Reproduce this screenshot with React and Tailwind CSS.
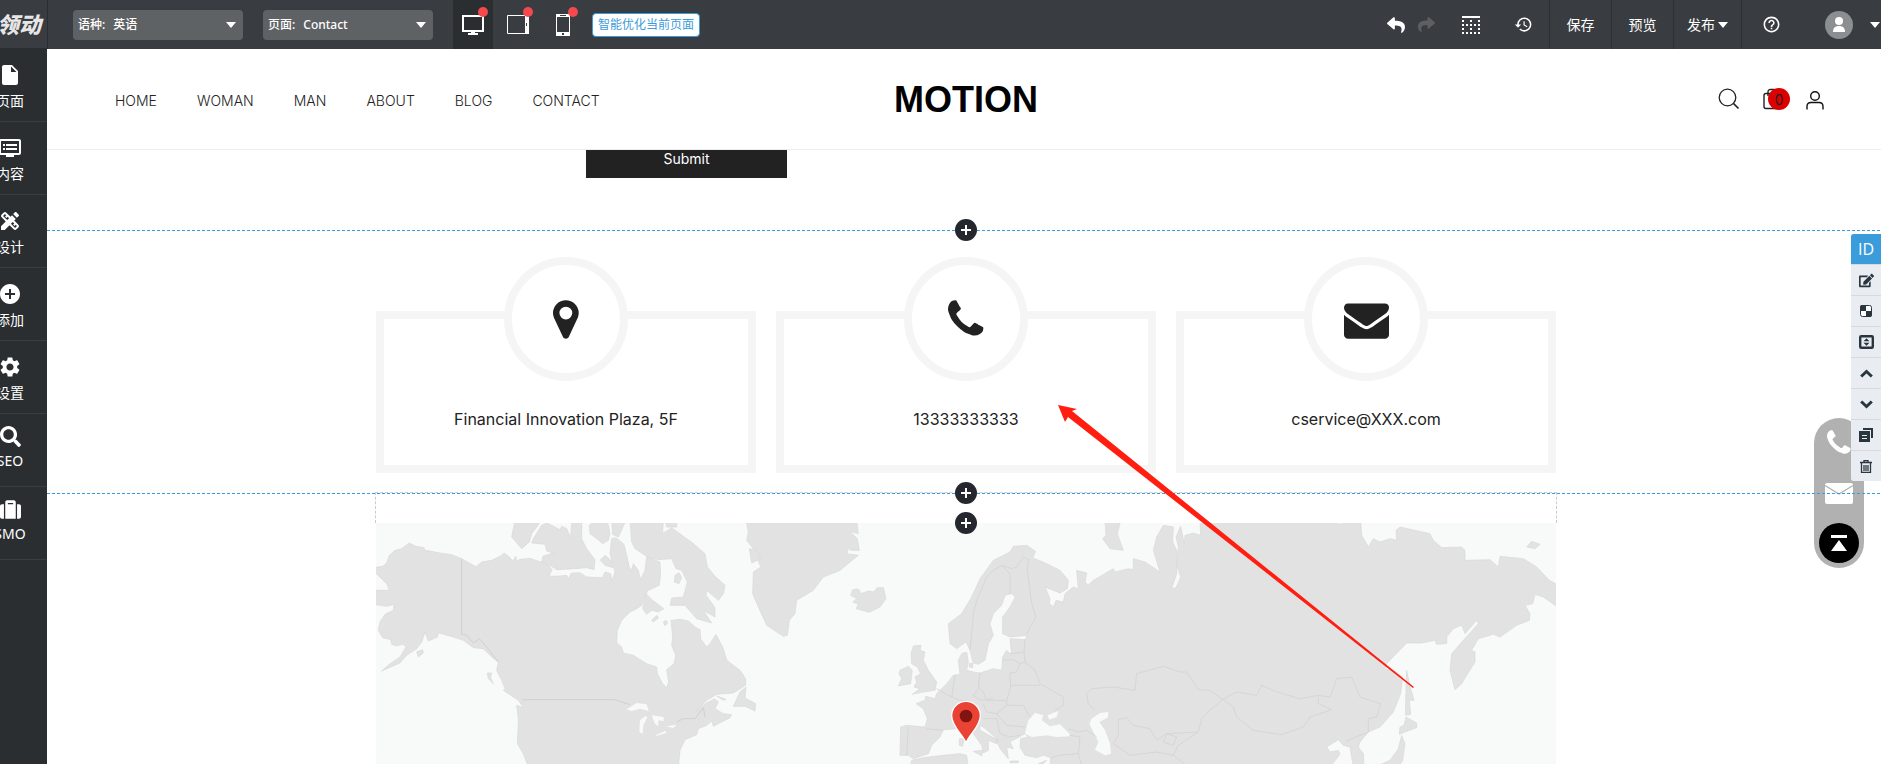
import { useState } from "react";
import {
  MdAddCircle,
  MdDesignServices,
  MdDvr,
  MdHelpOutline,
  MdInsertDriveFile,
  MdRestore,
  MdSettings,
} from "react-icons/md";
import { FaEdit, FaReply, FaSearch, FaShare, FaSuitcase } from "react-icons/fa";

const SIDE_ITEMS = [
  { label: "页面", Icon: MdInsertDriveFile },
  { label: "内容", Icon: MdDvr },
  { label: "设计", Icon: MdDesignServices },
  { label: "添加", Icon: MdAddCircle },
  { label: "设置", Icon: MdSettings },
  { label: "SEO", Icon: FaSearch, compact: true },
  { label: "SMO", Icon: FaSuitcase, compact: true },
];

const NAV_LINKS = ["HOME", "WOMAN", "MAN", "ABOUT", "BLOG", "CONTACT"];

// Glyphs are drawn y-up on a 1792 unit em, so the svg flips them.
const GLYPHS = {
  marker: {
    width: 1024,
    d: "M768 896q0 106 -75 181t-181 75t-181 -75t-75 -181t75 -181t181 -75t181 75t75 181zM1024 896q0 -109 -33 -179l-364 -774q-16 -33 -47.5 -52t-67.5 -19t-67.5 19t-46.5 52l-365 774q-33 70 -33 179q0 212 150 362t362 150t362 -150t150 -362z",
  },
  phone: {
    width: 1408,
    d: "M1408 296q0 -27 -10 -70.5t-21 -68.5q-21 -50 -122 -106q-94 -51 -186 -51q-27 0 -53 3.5t-57.5 12.5t-47 14.5t-55.5 20.5t-49 18q-98 35 -175 83q-127 79 -264 216t-216 264q-48 77 -83 175q-3 9 -18 49t-20.5 55.5t-14.5 47t-12.5 57.5t-3.5 53q0 92 51 186q56 101 106 122q25 11 68.5 21t70.5 10q14 0 21 -3q18 -6 53 -76q11 -19 30 -54t35 -63.5t31 -53.5q3 -4 17.5 -25t21.5 -35.5t7 -28.5q0 -20 -28.5 -50t-62 -55t-62 -53t-28.5 -46q0 -9 5 -22.5t8.5 -20.5t14 -24t11.5 -19q76 -137 174 -235t235 -174q2 -1 19 -11.5t24 -14t20.5 -8.5t22.5 -5q18 0 46 28.5t53 62t55 62t50 28.5q14 0 28.5 -7t35.5 -21.5t25 -17.5q25 -15 53.5 -31t63.5 -35t54 -30q70 -35 76 -53q3 -7 3 -21z",
  },
  envelope: {
    width: 1792,
    d: "M1792 826v-794q0 -66 -47 -113t-113 -47h-1472q-66 0 -113 47t-47 113v794q44 -49 101 -87q362 -246 497 -345q57 -42 92.5 -65.5t94.5 -48t110 -24.5h1h1q51 0 110 24.5t94.5 48t92.5 65.5q170 123 498 345q57 39 100 87zM1792 1120q0 -79 -49 -151t-122 -123q-376 -261 -468 -325q-10 -7 -42.5 -30.5t-54 -38t-52 -32.5t-57.5 -27t-50 -9h-1h-1q-23 0 -50 9t-57.5 27t-52 32.5t-54 38t-42.5 30.5q-91 64 -262 182.5t-205 142.5q-62 42 -117 115.5t-55 136.5q0 78 41.5 130t118.5 52h1472q65 0 112.5 -47t47.5 -113z",
  },
};

const CONTACTS = [
  { glyph: "marker", text: "Financial Innovation Plaza, 5F" },
  { glyph: "phone", text: "13333333333" },
  { glyph: "envelope", text: "cservice@XXX.com" },
];

function Glyph({ name, className }) {
  const { width, d } = GLYPHS[name];
  return (
    <svg viewBox={`0 -1536 ${width} 1792`} className={className} fill="currentColor" aria-hidden="true">
      <path d={d} transform="scale(1 -1)" />
    </svg>
  );
}

function Caret() {
  return (
    <svg viewBox="0 0 10 6" className="h-[6px] w-[10px] shrink-0" fill="currentColor" aria-hidden="true">
      <path d="M0 0h10L5 6z" />
    </svg>
  );
}

function TopSelect({ id, label, options }) {
  return (
    <div className="relative flex h-[30px] w-[170px] items-center rounded bg-[#5f6265] pl-[5px] text-[12px] font-medium text-white">
      <label htmlFor={id} className="shrink-0">
        {label}
      </label>
      <select id={id} className="h-full min-w-0 flex-1 appearance-none bg-transparent pl-2 outline-none">
        {options.map((option) => (
          <option key={option}>{option}</option>
        ))}
      </select>
      <span className="pointer-events-none absolute right-[7px]">
        <Caret />
      </span>
    </div>
  );
}

const DEVICES = [
  {
    id: "桌面",
    icon: (
      <svg viewBox="0 0 22 20" className="h-5 w-[22px]" fill="none" aria-hidden="true">
        <path d="M1 1h20v15H1z" stroke="#fff" strokeWidth="2" />
        <path d="M9 16h4v2h3v2H6v-2h3z" fill="#fff" />
      </svg>
    ),
  },
  {
    id: "平板",
    icon: (
      <svg viewBox="0 0 22 19" className="h-[19px] w-[22px]" fill="none" aria-hidden="true">
        <path d="M.5 .5h20v18H.5z" stroke="#fff" />
        <path d="M18 0h4v19h-4zm1 8v3h2V8z" fill="#fff" fillRule="evenodd" />
      </svg>
    ),
  },
  {
    id: "手机",
    icon: (
      <svg viewBox="0 0 14 22" className="h-[22px] w-[14px]" fill="none" aria-hidden="true">
        <path d="M.5 .5h13v21H.5z" stroke="#fff" />
        <path d="M0 0h14v3H0zm4 1v1h6V1zM0 18h14v4H0zm6 1v2h2v-2z" fill="#fff" fillRule="evenodd" />
      </svg>
    ),
  },
];

function TopBar() {
  const [device, setDevice] = useState("桌面");

  return (
    <header className="flex h-[49px] shrink-0 bg-[#393d41] text-white">
      <div className="flex w-12 shrink-0 items-center justify-end overflow-hidden border-r border-b border-[#2a2e34] pr-[6px] text-[22px] font-black whitespace-nowrap text-[#e6e6e6] italic">
        领动
      </div>
      <div className="ml-[25px] flex items-center gap-5">
        <TopSelect id="language" label="语种:" options={["英语", "中文"]} />
        <TopSelect id="page" label="页面:" options={["Contact", "Home", "Blog"]} />
      </div>
      <div className="ml-5 flex gap-[5px]">
        {DEVICES.map(({ id, icon }) => (
          <button
            key={id}
            aria-label={id}
            onClick={() => setDevice(id)}
            className={`relative flex w-10 items-center justify-center ${device === id ? "bg-[#2a2e31]" : ""}`}
          >
            {icon}
            <span className="absolute top-[7px] left-[25px] size-[10px] rounded-full bg-[#f4494d]" />
          </button>
        ))}
      </div>
      <button className="ml-[9px] h-6 self-center rounded border border-[#3b9cdb] bg-white px-[5px] text-[12px] whitespace-nowrap text-[#3b9cdb]">
        智能优化当前页面
      </button>

      <div className="ml-auto flex text-[14px]">
        <button aria-label="撤销" className="flex w-[30px] items-center justify-center">
          <FaReply size={18} />
        </button>
        <button aria-label="重做" className="flex w-[30px] items-center justify-center text-[#5d5f60]">
          <FaShare size={17} />
        </button>
        <button aria-label="网格" className="ml-1 flex w-[52px] items-center justify-center">
          <svg viewBox="0 0 18 18" className="size-[18px]" fill="none" stroke="#fff" strokeWidth="2" aria-hidden="true">
            <path d="M0 1h18" />
            <path d="M0 9h18M0 17h18" strokeDasharray="2 2" />
            <path d="M0 5h2M8 5h2M16 5h2M0 13h2M8 13h2M16 13h2" />
          </svg>
        </button>
        <button aria-label="历史" className="flex w-[52px] items-center justify-center">
          <MdRestore size={19} />
        </button>
        <button className="w-[62px] border-l border-[#2c3033]">保存</button>
        <button className="w-[62px] border-l border-[#2c3033]">预览</button>
        <button className="flex w-[68px] items-center justify-center gap-[3px] border-l border-[#2c3033]">
          发布
          <Caret />
        </button>
        <button aria-label="帮助" className="flex w-[60px] items-center justify-center border-l border-[#2c3033]">
          <MdHelpOutline size={19} />
        </button>
        <button aria-label="账户" className="flex w-20 items-center gap-[17px] pl-6">
          <svg viewBox="0 0 28 28" className="size-7 shrink-0" aria-hidden="true">
            <circle cx="14" cy="14" r="14" fill="#8b8f91" />
            <circle cx="14" cy="10" r="4" fill="#fff" />
            <path d="M8 21c0-4 2-6 6-6s6 2 6 6z" fill="#fff" />
          </svg>
          <Caret />
        </button>
      </div>
    </header>
  );
}

function Sidebar() {
  return (
    <nav className="flex w-[47px] shrink-0 justify-end overflow-hidden bg-[#2a2e31] text-white">
      <ul className="w-[74px] shrink-0">
        {SIDE_ITEMS.map(({ label, Icon, compact }) => (
          <li key={label} className="h-[73px] border-b border-[#3a3e44]">
            <button
              className={`flex h-full w-full flex-col items-center text-[14px] leading-5 ${
                compact ? "gap-1 pt-3" : "gap-1 pt-[14px]"
              }`}
            >
              <Icon size={compact ? 21 : 24} />
              {label}
            </button>
          </li>
        ))}
      </ul>
    </nav>
  );
}

function SiteHeader() {
  return (
    <div className="relative z-10 grid h-[101px] shrink-0 grid-cols-[1fr_auto_1fr] items-center border-b border-[#ececec] bg-white px-[58px] pt-0.5 text-[#222]">
      <nav className="flex gap-10 pl-2.5 text-[14px] font-light">
        {NAV_LINKS.map((link) => (
          <a key={link} href={`#${link.toLowerCase()}`}>
            {link}
          </a>
        ))}
      </nav>
      <a href="#top" className="font-['Liberation_Sans',Arial,sans-serif] text-[36px] leading-10 font-bold text-black">
        MOTION
      </a>
      <div className="flex items-center justify-end gap-[19px]">
        <button aria-label="Search">
          <svg viewBox="0 0 24 24" className="size-6" fill="none" stroke="#222" strokeWidth="1.3" aria-hidden="true">
            <circle cx="10.5" cy="9.5" r="8.3" />
            <path d="M16.5 15.5l5 5" strokeWidth="1.7" />
          </svg>
        </button>
        <button aria-label="Cart" className="relative">
          <svg viewBox="0 0 24 24" className="size-6" fill="none" stroke="#222" strokeWidth="1.4" aria-hidden="true">
            <rect x="4" y="5.5" width="16" height="15" rx="2" />
            <path d="M8 8V4q0-2.500 2.500-2.500h3q2.500 0 2.500 2.500v4" />
          </svg>
          <span className="absolute top-0 left-2 flex size-[22px] items-center justify-center rounded-full bg-[#dc0000] text-[14px]">
            0
          </span>
        </button>
        <button aria-label="Account">
          <svg viewBox="0 0 24 24" className="size-6" fill="none" stroke="#111" strokeWidth="1.4" aria-hidden="true">
            <circle cx="12" cy="8" r="4.300" />
            <path d="M4 21.500v-3q0-4 4-4h8q4 0 4 4v3" />
          </svg>
        </button>
      </div>
    </div>
  );
}

function AddButton() {
  return (
    <button
      aria-label="添加模块"
      className="absolute -bottom-[11px] left-1/2 z-10 flex size-[22px] -translate-x-1/2 items-center justify-center rounded-full bg-[#24272e]"
    >
      <svg viewBox="0 0 10 10" className="size-[10px]" stroke="#fff" strokeWidth="2" aria-hidden="true">
        <path d="M5 0v10M0 5h10" />
      </svg>
    </button>
  );
}

function WorldMap() {
  return (
    <svg viewBox="0 0 3540 723" preserveAspectRatio="xMidYMin slice" className="h-full w-full bg-[#f8faf9]" role="img" aria-label="World map">
      {/* North America and Greenland */}
      <g transform="translate(-18 -158)" fill="#e2e2e2" stroke="#d8d8d8" strokeWidth="2" strokeLinejoin="round">
        <path d="M10 292L38 288L50 278L58 255L75 240L95 235L118 218L138 228L162 232L165 240L185 243L210 248L245 253L275 265L298 278L318 289L335 275L365 270L390 258L402 248L415 257L428 272L438 258L440 275L448 267L480 264L520 278L540 290L546 298L537 318L570 317L590 315L596 325L604 308L630 307L650 320L697 322L705 305L722 310L726 332L735 305L720 250L725 205L738 202L762 222L770 255L778 290L785 300L790 280L805 300L812 328L825 300L830 258L870 275L872 310L868 345L835 360L828 370L815 405L800 415L780 425L755 450L742 480L740 517L755 530L760 548L790 555L830 580L860 590L862 610L878 640L890 652L896 635L890 598L912 580L917 555L905 525L908 500L903 450L930 447L955 452L975 470L990 478L992 505L1010 530L1020 520L1038 492L1060 535L1070 570L1110 600L1127 625L1127 645L1090 668L1040 672L1010 690L985 715L980 722L1005 700L1035 685L1045 695L1035 715L1060 730L1085 733L1080 742L1030 768L1025 752L1010 765L985 775L980 793L945 808L930 840L925 890L475 890L460 850L442 820L445 750L440 705L460 712L445 690L400 660L405 655L395 630L380 600L385 575L365 560L340 535L310 532L280 510L250 500L225 493L205 487L203 500L175 512L165 485L155 515L140 535L110 555L90 578L35 602L60 580L90 560L108 530L98 522L80 527L65 522L62 508L38 502L25 480L30 455L45 432L70 420L72 402L50 408L10 402L10 360L58 360L50 340L10 302Z" />
        <path d="M435 150L425 200L455 235L478 215L485 190L515 150Z" />
        <path d="M515 165L490 205L485 218L525 222L530 242L550 248L518 258L515 275L545 288L560 298L615 295L650 292L672 298L675 268L650 235L635 205L635 150L605 150L602 202L590 175L575 168L570 178L545 165L530 158Z" />
        <path d="M658 165L675 150L712 150L720 190L715 210L698 220L680 205L660 190Z" />
        <path d="M690 270L705 255L725 272L728 292L705 285Z" />
        <path d="M725 150L768 150L745 200L728 192Z" />
        <path d="M780 150L880 150L878 190L905 172L940 198L968 218L1005 250L1012 290L1035 318L1065 345L1060 370L1045 390L1010 360L1008 375L1035 412L1035 440L1000 420L1025 458L980 445L945 405L900 405L905 383L940 380L952 335L935 300L918 295L905 265L865 268L830 258L795 235L785 215Z" />
        <path d="M885 150H920V170H890Z" />
        <path d="M828 370L850 392L882 415L865 425L845 420L830 432L818 415Z" />
        <path d="M845 450L860 435L866 442L850 455ZM880 455L888 450L893 458L885 466ZM915 315L927 307L935 322L927 340L913 335Z" />
        <path d="M1128 650L1110 665L1090 708L1125 708L1155 722L1157 700L1125 683ZM1040 677L1068 687L1060 690ZM352 608L365 608L362 622L370 640L355 625ZM140 545L158 538L160 548L145 560Z" />
        <path d="M1128 150L1135 185L1130 210L1150 235L1165 240L1160 258L1172 290L1150 305L1148 370L1165 410L1190 465L1220 485L1240 498L1252 495L1258 450L1275 430L1280 390L1330 360L1360 320L1410 300L1465 255L1430 250L1438 230L1442 240L1468 240L1462 205L1440 183L1465 190L1460 150Z" />
        <path d="M1138 235L1160 240L1172 265L1145 278Z" />
        <g fill="#f8faf9" stroke="none">
          <path d="M770 717L800 698L830 702L836 722L810 715L785 722ZM825 738L832 740L820 765L818 790L808 785L810 750ZM845 735L880 740L882 752L865 750L865 768L855 760ZM855 795L885 782L890 787L860 796ZM888 768L920 763L910 773Z" />
        </g>
        <path d="M275 265V492L290 495L310 518L328 505L348 528L385 575M457 688H733L780 703M920 755L940 745L975 745L1000 712L1005 740" fill="none" stroke="#d0d0d0" strokeWidth="3" />
      </g>

      {/* Europe and Asia */}
      <g transform="translate(1212 -158)" fill="#e2e2e2" stroke="#d8d8d8" strokeWidth="2" strokeLinejoin="round">
        <path d="M505 460L545 430L575 380L600 325L640 270L690 245L700 228L740 225L767 243L758 262L800 280L840 300L865 330L862 355L840 368L795 350L810 385L808 400L820 410L828 390L850 395L855 370L880 350L895 355L890 300L920 308L915 335L925 345L940 330L1000 295L1005 305L1045 295L1060 298L1060 265L1095 275L1140 305L1120 240L1130 200L1150 165L1180 170L1178 215L1190 240L1190 310L1175 355L1188 352L1202 320L1190 285L1195 230L1188 200L1202 168L1213 220L1215 195L1240 188L1262 195L1260 150L1640 150L1685 163L1688 150L1742 150L1745 195L1765 230L1780 205L1800 215L1830 205L1850 210L1848 180L1860 170L1950 190L1960 210L1985 232L2045 230L2055 240L2055 270L2130 268L2155 290L2160 258L2230 265L2270 290L2308 330L2330 342H2345V408L2330 408L2290 380L2265 372L2258 400L2235 405L2250 430L2248 450L2210 465L2160 500L2140 492L2095 505L2075 540L2085 545L2085 575L2060 615L2045 640L2025 658L2010 600L2015 550L2050 510L2095 460L2090 450L2055 490L2045 465L2020 475L2000 500L2000 520L1970 522L1965 510L1925 518L1880 518L1820 580L1815 597L1840 600L1868 620L1862 670L1840 725L1800 770L1765 785L1740 815L1735 830L1750 850L1752 890L1720 890L1710 830L1690 825L1675 808L1640 830L1650 845L1675 840L1680 852L1650 890H810L812 862L790 855L770 862L735 855L720 830L722 805L745 800L735 790L690 815L700 835L680 830L685 865L660 835L645 800L610 770L600 765L600 780L655 810L650 820L625 810L625 840L610 848L605 825L580 790L560 770L540 775L490 778L480 800L455 825L445 850L400 865L385 855L360 855L362 770L380 765L435 770L442 745L430 715L408 700L435 690L437 678L465 685L470 670L500 640L520 615L540 612L535 570L545 550L560 545L565 575L560 600L580 605L600 608L640 595L665 600L668 560L680 540L695 555L690 505L735 508L742 495L690 500L668 490L668 440L690 410L706 380L695 370L675 375L665 405L640 430L630 460L640 495L625 520L615 570L595 582L580 578L570 540L558 515L530 535L510 520Z" />
        <path d="M212 375L218 358L235 356L243 370L265 362L280 365L292 352L310 352L318 385L300 410L268 426L228 415L235 402L218 395L230 385Z" />
        <path d="M400 527L423 525L420 540L435 545L430 570L445 600L470 635L465 660L430 665L397 672L420 655L402 650L410 635L405 620L422 610L412 590L395 580L393 550Z" />
        <path d="M360 600L385 588L397 600L392 640L355 647L365 625L357 610Z" />
        <path d="M580 843L608 840L605 857ZM538 805L552 805L548 828L538 825ZM690 872H715V877H690ZM775 880L800 870L790 880ZM568 580L578 578L578 592L568 590Z" />
        <path d="M390 890L395 870L430 862L490 855L540 850L560 855L565 890Z" />
        <path d="M975 150L1022 150L1012 190L1030 240L990 235L968 205L978 195Z" />
        <path d="M1880 600L1888 640L1902 690L1888 690L1892 732L1876 735L1878 650ZM1878 740L1910 758L1910 772L1875 785L1858 792L1860 770L1872 765ZM1865 795L1875 820L1868 870L1855 890L1785 890L1830 870L1855 835ZM2240 230L2255 213L2280 222L2265 235Z" />
        <g fill="#f8faf9" stroke="none">
          <path d="M735 790L745 750L765 728L790 735L785 750L810 768L840 762L868 790L868 798L830 800L800 795L755 800ZM803 735L835 722L830 740L808 748Z" />
          <path d="M960 728L985 725L983 742L958 755L975 780L990 820L993 850L975 855L945 838L955 815L928 760L935 745Z" />
        </g>
        <path
          d="M570 540L575 490L580 430L590 390L620 320L640 300L665 285L690 310V370M665 285L695 295L710 290L730 260L745 268L742 300L755 400L768 440L740 490M735 508L732 545L735 575L765 600L780 640L850 680L850 705L825 720M690 550L732 545M668 570L700 568L720 580L710 605L690 608L692 650L680 690L620 690L610 665L595 650L600 608M692 645L780 645M720 580L735 575M525 615L515 680L540 690L560 690M470 655L515 680M440 775L490 780M600 650L580 675L600 690L640 685M680 690L680 705L650 730L620 725L610 700M680 705L730 705L750 740M650 730L680 765L735 770M610 745L650 745L660 790M385 770L380 855M660 790L690 800L720 795M865 775L895 785L920 780L950 800M870 795L900 800L895 850L840 855L815 862M895 850L905 885M925 700L920 670L935 655L1000 650L1065 660L1070 610L1150 588L1200 605L1220 605L1255 658L1290 660L1328 687M925 700L945 720M1015 795V748L1040 742L1060 765L1110 775L1130 810L1160 790L1255 785L1265 745L1290 720L1328 687L1370 665L1430 675L1445 645L1490 665L1560 685L1615 675L1650 680L1670 625L1715 620L1740 680L1802 700L1790 740L1765 745V785M1328 687L1360 710L1370 740L1420 780L1505 793L1570 770L1590 740L1655 718L1615 700L1615 675M1015 795L1000 820L1050 855L1130 845L1180 855L1215 882M1255 785L1195 825L1180 855M1700 812L1765 785M1150 815L1160 790L1190 800L1180 825Z"
          fill="none"
          stroke="#d6d6d6"
          strokeWidth="3"
        />
        <path d="M558 818C552 795 515 770 515 736A43 43 0 0 1 601 736C601 770 564 795 558 818Z" fill="#ea4335" stroke="#fff" strokeWidth="4" />
        <circle cx="558" cy="737" r="19" fill="#811411" stroke="none" />
      </g>
    </svg>
  );
}

function Canvas() {
  return (
    <main className="-mr-1 flex min-w-0 flex-1 flex-col overflow-hidden font-[Inter,sans-serif]">
      <SiteHeader />
      <section className="relative h-[81px] shrink-0 border-b border-dashed border-[#3b9cdb]">
        <div className="mx-auto flex max-w-[1180px]">
          <button className="-mt-3 ml-[210px] h-10 w-[201px] bg-[#222] text-[14px] text-white">Submit</button>
        </div>
        <AddButton />
      </section>

      <section className="relative z-10 shrink-0 border-b border-dashed border-[#3b9cdb] pt-20 pb-5">
        <div className="mx-auto grid max-w-[1180px] grid-cols-3 gap-5">
          {CONTACTS.map(({ glyph, text }) => (
            <article key={text} className="flex flex-col items-center border-8 border-[#f5f5f5] pb-[34px] text-[#222]">
              <div className="-mt-[62px] flex size-[124px] items-center justify-center rounded-full border-8 border-[#f5f5f5] bg-white">
                <Glyph name={glyph} className="h-[45px]" />
              </div>
              <p className="mt-[26px] text-[16px] leading-6">{text}</p>
            </article>
          ))}
        </div>
        <AddButton />
      </section>

      <section className="flex min-h-0 flex-1 flex-col">
        <div className="relative mx-auto -mt-0.5 h-[31px] w-full max-w-[1182px] shrink-0 border-x border-t border-dashed border-[#ccc]">
          <AddButton />
        </div>
        <div className="mx-auto min-h-0 w-full max-w-[1180px] flex-1 overflow-hidden">
          <WorldMap />
        </div>
      </section>
    </main>
  );
}

const BLOCK_TOOLS = [
  { label: "编辑", icon: <FaEdit size={15} /> },
  {
    label: "背景",
    icon: (
      <svg viewBox="0 0 12 12" className="size-3" aria-hidden="true">
        <rect x=".5" y=".5" width="11" height="11" rx="2" fill="#fff" stroke="#2a363e" />
        <path d="M6 0h4q2 0 2 2v4H6zM0 6h6v6H2q-2 0-2-2z" fill="#2a363e" transform="matrix(-1 0 0 1 12 0)" />
      </svg>
    ),
  },
  {
    label: "间距",
    icon: (
      <svg viewBox="0 0 15 14" className="h-[14px] w-[15px]" aria-hidden="true">
        <rect x="1.200" y="1.200" width="12.600" height="11.600" rx="1" fill="none" stroke="#2a363e" strokeWidth="2.400" />
        <path d="M7.500 3.200l3 3h-6zM7.500 10.800l3-3h-6z" fill="#2a363e" />
      </svg>
    ),
  },
  {
    label: "上移",
    icon: (
      <svg viewBox="0 0 13 9" className="h-[9px] w-[13px]" fill="none" stroke="#2a363e" strokeWidth="3" aria-hidden="true">
        <path d="M1.200 7.500l5.300-5 5.300 5" />
      </svg>
    ),
  },
  {
    label: "下移",
    icon: (
      <svg viewBox="0 0 13 9" className="h-[9px] w-[13px]" fill="none" stroke="#2a363e" strokeWidth="3" aria-hidden="true">
        <path d="M1.200 1.500l5.300 5 5.300-5" />
      </svg>
    ),
  },
  {
    label: "复制",
    icon: (
      <svg viewBox="0 0 14 14" className="size-[14px]" fill="#2a363e" aria-hidden="true">
        <path d="M4 0h10v10h-2V2H4z" />
        <path d="M0 3h11v11H0zm3 4v1h5V7zm0 3v1h5v-1z" fillRule="evenodd" />
      </svg>
    ),
  },
  {
    label: "删除",
    icon: (
      <svg viewBox="0 0 12 13" className="h-[13px] w-3" fill="none" stroke="#2a363e" aria-hidden="true">
        <path d="M0 2.500h12M4 2V.5h4V2M1.500 3v9.500h9V3M4 5v6M6 5v6M8 5v6" strokeWidth="1.300" />
      </svg>
    ),
  },
];

function BlockTools() {
  return (
    <div className="absolute top-[234px] right-0 z-30 flex w-[30px] flex-col overflow-hidden rounded-l-[3px] bg-[#d5dade] text-[#2a363e]">
      <button className="h-[30px] bg-[#3b9cdb] font-['Open_Sans',sans-serif] text-[16px] text-white">ID</button>
      {BLOCK_TOOLS.map(({ label, icon }) => (
        <button key={label} aria-label={label} className="mt-px flex h-[30px] items-center justify-center bg-[#e9edf2]">
          {icon}
        </button>
      ))}
    </div>
  );
}

function FloatingContact() {
  return (
    <div className="absolute top-[418px] right-[17px] flex w-[50px] flex-col rounded-full bg-[#b1b1b1] text-white">
      <a href="#phone" aria-label="Phone" className="flex h-[50px] items-center justify-center">
        <Glyph name="phone" className="h-[30px]" />
      </a>
      <a href="#mail" aria-label="Mail" className="flex h-[50px] items-center justify-center">
        <svg viewBox="0 0 28 21" className="h-[21px] w-7" aria-hidden="true">
          <rect width="28" height="21" rx="2" fill="#fff" />
          <path d="M0 2.500l14 8.500 14-8.500" fill="none" stroke="#b1b1b1" strokeWidth="1.300" />
        </svg>
      </a>
      <a href="#top" aria-label="Back to top" className="m-[5px] flex size-10 items-center justify-center rounded-full bg-black">
        <svg viewBox="0 0 16 16" className="size-4" fill="#fff" aria-hidden="true">
          <path d="M0 0h16v3H0zM8 5l8 11H0z" />
        </svg>
      </a>
    </div>
  );
}

export default function App() {
  return (
    <div className="relative flex h-screen flex-col overflow-hidden bg-white font-['Noto_Sans','Noto_Sans_CJK_SC',sans-serif]">
      <TopBar />
      <div className="flex min-h-0 flex-1">
        <Sidebar />
        <Canvas />
      </div>
      <FloatingContact />
      <BlockTools />
      <svg viewBox="0 0 356 283" className="pointer-events-none absolute top-[405px] left-[1058px] z-20 h-[283px] w-[356px]" fill="#ff1e10" aria-hidden="true">
        <path d="M0 0L19 4L14 6L356 282L355 283L10 12L7 17Z" />
      </svg>
    </div>
  );
}
